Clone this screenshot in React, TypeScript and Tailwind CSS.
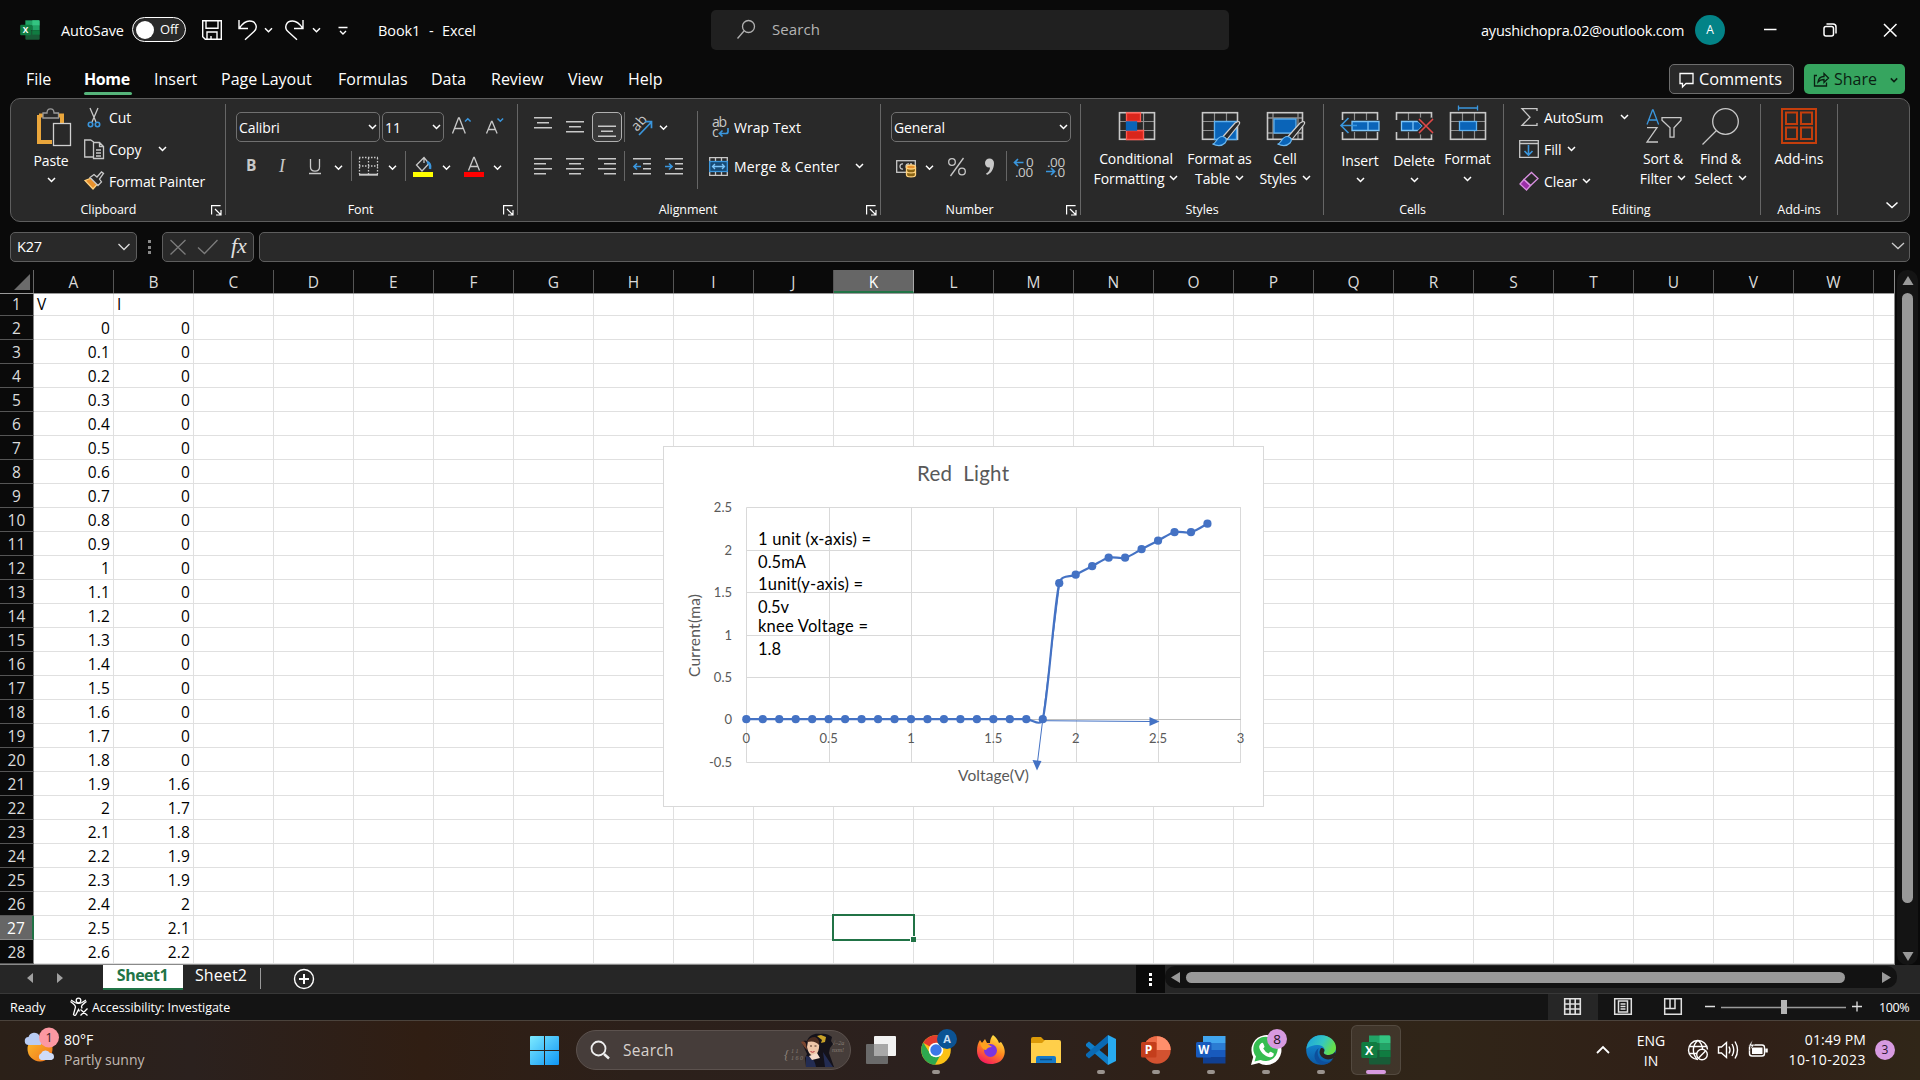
import React from 'react';

const ROWS: [string, string][] = [
  ['0', '0'], ['0.1', '0'], ['0.2', '0'], ['0.3', '0'], ['0.4', '0'], ['0.5', '0'], ['0.6', '0'], ['0.7', '0'],
  ['0.8', '0'], ['0.9', '0'], ['1', '0'], ['1.1', '0'], ['1.2', '0'], ['1.3', '0'], ['1.4', '0'], ['1.5', '0'],
  ['1.6', '0'], ['1.7', '0'], ['1.8', '0'], ['1.9', '1.6'], ['2', '1.7'], ['2.1', '1.8'], ['2.2', '1.9'],
  ['2.3', '1.9'], ['2.4', '2'], ['2.5', '2.1'], ['2.6', '2.2'],
];
const SERIES = [...Array(19).fill(0), 1.6, 1.7, 1.8, 1.9, 1.9, 2, 2.1, 2.2, 2.2, 2.3] as number[];
const COLS = 'ABCDEFGHIJKLMNOPQRSTUVW'.split('');

type IcoProps = { x: number; y: number; w: number; h: number; c?: string; children?: React.ReactNode };

/** Icon drawn in window coordinates: x, y, w and h give its view box and size. */
function Ico({ x, y, w, h, c = '', children }: IcoProps) {
  return (
    <svg width={w} height={h} viewBox={`${x} ${y} ${w} ${h}`} className={`block shrink-0 overflow-visible ${c}`}
      fill="none" stroke="#c8c8c8" strokeWidth={1.3}>
      {children}
    </svg>
  );
}

function Chev({ x, y, s = 3.5, c = '#fff' }: { x: number; y: number; s?: number; c?: string }) {
  return <path d={`M${x - s} ${y - s / 2}l${s} ${s}l${s} ${-s}`} stroke={c} strokeWidth={1.5} />;
}

function DownMark({ c = '' }: { c?: string }) {
  return (
    <svg width="9" height="6" viewBox="0 0 9 6" className={`block shrink-0 ${c}`} fill="none" stroke="#fff" strokeWidth="1.5">
      <path d="M1 1l3.500 3.500L8 1" />
    </svg>
  );
}

function ExcelLogo({ size }: { size: number }) {
  return (
    <svg width={size} height={size} viewBox="0 0 30 30" className="block shrink-0">
      <path d="M8 .5h21v8H8z" fill="#21a366" /><path d="M18.500 .5H28a1.500 1.500 0 0 1 1.500 1.500v6.500h-11z" fill="#33c481" />
      <path d="M8 8.500h10.500v7H8z" fill="#107c41" /><path d="M18.500 8.500h11v7h-11z" fill="#21a366" />
      <path d="M8 15.500h21.500V28a1.500 1.500 0 0 1-1.500 1.500H9.500A1.500 1.500 0 0 1 8 28z" fill="#185c37" />
      <path d="M18.500 15.500h11V22h-11z" fill="#107c41" />
      <rect x="0.300" y="7" width="16" height="16" rx="1.500" fill="#107c41" />
      <text x="8.200" y="19.600" fontSize="12.500" fontWeight="700" fill="#fff" textAnchor="middle" fontFamily="Open Sans">X</text>
    </svg>
  );
}

function TitleBar() {
  return (
    <div className="flex h-[60px] items-start">
      <div className="ml-5 mt-5"><ExcelLogo size={20} /></div>
      <span className="ml-[21px] mt-[21px] w-[71px] text-[14.500px] leading-[20px] tracking-[-0.05px]">AutoSave</span>
      <div className="mt-[17px] flex h-[25px] w-[54px] items-center rounded-full border border-white bg-[#292929] pl-[3px]">
        <div className="size-[18px] rounded-full bg-white" />
        <span className="ml-[6px] text-[13px] tracking-[-0.2px]">Off</span>
      </div>
      <Ico x={186} y={0} w={166} h={60}>
        <g stroke="#fff" strokeWidth={1.4}>
          <path d="M202.700 20.700h18.600v18.600h-16l-2.600-2.600z M206 20.700v7.600h12v-7.600 M207 39v-7h10v7 M211 39v-3" />
          <path d="M239 20v8.500h9 M239.500 28c3-4.500 6.500-7 10-7c7 0 8.500 7 4.500 10.500l-9 8.300" />
          <path d="M303 20v8.500h-9 M302.500 28c-3-4.500-6.500-7-10-7c-7 0-8.500 7-4.500 10.500l9 8.300" />
          <path d="M338.500 27.500h9 M340 31l3 3l3-3" />
        </g>
        <Chev x={268.5} y={30} /><Chev x={316.5} y={30} />
      </Ico>
      <span className="ml-[26px] mt-[21px] flex w-[333px] text-[14.500px] leading-[20px] tracking-[-0.1px]">
        <span className="w-[51px]">Book1</span><span className="w-[13px]">-</span><span>Excel</span>
      </span>
      <div className="mt-[10px] flex h-10 w-[518px] items-center rounded-[5px] bg-[#202020]">
        <Ico x={711} y={10} w={61} h={40}>
          <g stroke="#b0b0b0"><circle cx="748.500" cy="26.500" r="6" /><path d="M744 31l-6.500 7.500" /></g>
        </Ico>
        <span className="-mt-px text-[15px] tracking-[0.1px] text-[#b4b4b4]">Search</span>
      </div>
      <span className="ml-[252px] mt-[21px] w-[214px] whitespace-nowrap text-[14.500px] leading-[20px] tracking-[-0.210px]">ayushichopra.02@outlook.com</span>
      <div className="mt-[15px] flex size-[30px] items-center justify-center rounded-full bg-[#038387] text-[12px]">A</div>
      <Ico x={1725} y={0} w={195} h={60}>
        <g stroke="#fff" strokeWidth={1.5}>
          <path d="M1764 29.500h12.500 M1884 24l12.500 12.500 M1896.500 24l-12.500 12.500" />
          <rect x="1824" y="26.500" width="9.500" height="9.500" rx="2" />
          <path d="M1826.500 24h6.500a3 3 0 0 1 3 3v6.500" />
        </g>
      </Ico>
    </div>
  );
}

const TABS: [string, string][] = [
  ['Insert', 'w-[67px]'], ['Page Layout', 'w-[117px]'], ['Formulas', 'w-[93px]'], ['Data', 'w-[60px]'],
  ['Review', 'w-[77px]'], ['View', 'w-[60px]'], ['Help', 'w-[60px]'],
];

function TabStrip() {
  return (
    <div className="flex h-[38px] whitespace-nowrap text-[16px] leading-[38px]">
      <span className="ml-[26px] w-[58px]">File</span>
      <div className="mr-[22px] flex w-[48px] flex-col">
        <span className="h-8 font-bold tracking-[-0.4px]">Home</span>
        <div className="h-[3px] w-full rounded bg-[#55b47a]" />
      </div>
      {TABS.map(([t, w]) => <span key={t} className={w}>{t}</span>)}
      <div className="ml-auto mt-1 flex h-[30px] w-[125px] items-center rounded-[5px] border border-[#6e6e6e] bg-[#292929]">
        <Ico x={1670} y={64} w={29} h={28}>
          <path d="M1680 72.500h13v10h-7l-3.500 3.500v-3.500h-2.500z" stroke="#fff" />
        </Ico>
        <span className="text-[16.300px]">Comments</span>
      </div>
      <div className="ml-[10px] mr-[15px] mt-1 flex h-[30px] w-[101px] items-center rounded-[5px] bg-[#36a55f] text-[#0a1f12]">
        <Ico x={1804} y={64} w={30} h={30}>
          <g stroke="#0a1f12">
            <path d="M1817 75.500h-2.500v10.500h12v-3.500" />
            <path d="M1818 82c.5-3.500 3-5.500 6-5.500v-3l4.500 4.500l-4.500 4.500v-3c-2.500 0-4.500.8-6 2.500z" />
          </g>
        </Ico>
        <span className="w-[56px] text-[16px]">Share</span>
        <Ico x={1890} y={64} w={12} h={30}><Chev x={1894} y={80} s={3.2} c="#0a1f12" /></Ico>
      </div>
    </div>
  );
}

type GroupProps = { label: string; w: string; launcher?: boolean; pad?: string; children: React.ReactNode };

function Group({ label, w, launcher, pad = '', children }: GroupProps) {
  return (
    <div className={`flex h-[111px] shrink-0 flex-col border-r border-[#666] ${w}`}>
      <div className="flex h-[97px] shrink-0 whitespace-nowrap text-[14px] tracking-[-0.1px]">{children}</div>
      <div className="flex h-[18px] shrink-0 items-center">
        <span className={`flex-1 text-center text-[12.500px] leading-[18px] tracking-[-0.1px] ${pad}`}>{label}</span>
        {launcher && (
          <svg width="11" height="11" viewBox="0 0 11 11" className="mr-[3px]" fill="none" stroke="#fff" strokeWidth="1.2">
            <path d="M.6 9.500V.6h9 M4 4l5.500 5.500 M10 5v5H5" />
          </svg>
        )}
      </div>
    </div>
  );
}

const Sep = ({ c = 'h-[30px]' }: { c?: string }) => <div className={`w-px shrink-0 bg-[#666] ${c}`} />;

type BigProps = { w: string; icon: React.ReactNode; a: string; b?: string; low?: boolean; mark?: boolean };

function Big({ w, icon, a, b, low, mark = true }: BigProps) {
  return (
    <div className={`flex shrink-0 flex-col items-center ${w}`}>
      {icon}
      <span className={low ? 'mt-[3px] h-5 leading-[20px]' : 'mt-px h-5 leading-[20px]'}>{a}</span>
      <div className={low ? 'mt-px flex h-4 items-center' : 'flex h-5 items-center'}>
        {b && <span className="mr-[5px] leading-[20px]">{b}</span>}
        {mark && <DownMark c={b ? '-mt-[3px]' : ''} />}
      </div>
    </div>
  );
}

function TableGlyph({ x }: { x: number }) {
  return (
    <g>
      <path d={`M${x + 12} 113v27 M${x + 24} 113v27 M${x} 121.500h35 M${x} 130.500h35`} stroke="#8f8f8f" strokeWidth={1.2} />
      <rect x={x} y={112.7} width={35} height={26.6} strokeWidth={1.6} />
    </g>
  );
}

function BrushGlyph({ x }: { x: number }) {
  return (
    <g>
      <path d={`M${x + 35.5} 121.500c2 0 2 1.500 1 3l-12 15l-4-3l12-13.500z`} fill="#292929" stroke="#d0d0d0" strokeWidth={1.2} />
      <path d={`M${x + 10} 144c4 0 4-8 10-7.500c4 .5 5 4 2.500 6.500c-3 3-8 3-12.500 1z`} fill="#0a64b8" stroke="#6cb8f0" strokeWidth={1.2} />
    </g>
  );
}

function Ribbon() {
  return (
    <div className="mx-[10px] flex h-[124px] rounded-[10px] border border-[#5e5e5e] bg-[#292929] pt-[5px]">
      <Group label="Clipboard" w="w-[215px]" launcher pad="pr-[5px]">
        <div className="ml-[6px] flex w-[68px] flex-col items-center">
          <Ico x={17} y={104} w={68} h={44}>
            <path d="M39 115.500h23v10 M39 115v27h13" stroke="#eaa63b" strokeWidth={4} />
            <path d="M43 118v-5h4c0-5.500 7-5.500 7 0h4.500v5z" fill="#292929" stroke="#9a9a9a" />
            <rect x="53.500" y="123.500" width="17" height="22" fill="#292929" stroke="#d0d0d0" />
          </Ico>
          <span className="h-[26px] leading-[25px]">Paste</span>
          <DownMark c="mt-[3px]" />
        </div>
        <div className="-mt-[3px] flex flex-col">
          <div className="flex h-8 items-center">
            <Ico x={85} y={101} w={24} h={32}>
              <path d="M90 108l6 14 M98 108l-6 14" />
              <g stroke="#3a96dd" strokeWidth={1.6}><circle cx="90.500" cy="124.500" r="2.200" /><circle cx="97.500" cy="124.500" r="2.200" /></g>
            </Ico>
            Cut
          </div>
          <div className="flex h-8 items-center">
            <Ico x={85} y={133} w={24} h={32}>
              <path d="M93 157h-8.300v-17h6l3 2" /><path d="M93.500 142.500h6l4 4v12h-10z M99.500 142.500v4h4 M96 150h5 M96 153h5 M96 156h5" />
            </Ico>
            <span className="w-[49px]">Copy</span><DownMark />
          </div>
          <div className="flex h-8 items-center">
            <Ico x={85} y={165} w={24} h={32}>
              <path d="M85 180.500l6.500-2.500l6 6l-4.500 5z" fill="#e8912d" stroke="#ffd27f" />
              <path d="M90 177.500l4-3l3 2.500l4.500-5l2 1.500l-4 5.500l2 3l-3.500 3.500z" fill="#292929" />
            </Ico>
            Format Painter
          </div>
        </div>
      </Group>

      <Group label="Font" w="w-[292px]" launcher pad="pr-[8px]">
        <div className="flex flex-col pt-2">
          <div className="ml-[10px] flex h-[30px]">
            <div className="mr-[2px] flex w-[144px] items-center rounded-[5px] border border-[#707070] pl-[2px] pr-[2px]">
              <span className="flex-1">Calibri</span><DownMark />
            </div>
            <div className="flex w-[62px] items-center rounded-[5px] border border-[#707070] pl-[2px] pr-[2px]">
              <span className="flex-1">11</span><DownMark />
            </div>
            <Ico x={444} y={112} w={70} h={30}>
              <path d="M452.500 133.500l6-15.500h.8l6 15.500 M454.500 128.500h9 M486.500 133.500l5-12h.6l5 12 M488.500 129.500h7" />
              <g stroke="#3a96dd" strokeWidth={1.5}><path d="M465 121.500l2.800-2.800l2.800 2.800 M497.500 118.500l2.800 2.800l2.800-2.800" /></g>
            </Ico>
          </div>
          <div className="ml-[10px] mt-2 flex h-8 items-center">
            <span className="ml-[10px] w-[33px] text-[15.500px] font-bold text-[#c8c8c8]">B</span>
            <span className="w-[30px] font-['Liberation_Serif'] text-[18px] italic text-[#c8c8c8]">I</span>
            <Ico x={308} y={150} w={42} h={32}>
              <path d="M309.500 159v8c0 5.500 9 5.500 9 0v-8 M308 173.500h12" /><Chev x={337.5} y={167.5} />
            </Ico>
            <Sep />
            <Ico x={352} y={150} w={53} h={32}>
              <path d="M359.500 158v16 M368.500 158v16 M377.500 158v16 M359 157.500h19 M359 166h19" strokeDasharray="1.500 1.500" />
              <path d="M359 174.700h19" strokeWidth={2} /><Chev x={392.5} y={167.5} />
            </Ico>
            <Sep />
            <Ico x={406} y={150} w={53} h={32}>
              <path d="M416.500 165l7.500-7.500l5 6l-7 7.500z M424 163v-6" /><path d="M427 162c3 1 3.500 4 3 7" stroke="#3a96dd" strokeWidth={2.5} />
              <rect x="413" y="172" width="20" height="5" fill="#ff0" stroke="none" /><Chev x={446.5} y={167.5} />
            </Ico>
            <Ico x={459} y={150} w={50} h={32}>
              <path d="M468.500 170.500l5.200-13h.6l5.200 13 M470.500 166.500h7" />
              <rect x="464" y="172" width="20" height="5" fill="#f00" stroke="none" /><Chev x={497.5} y={167.5} />
            </Ico>
          </div>
        </div>
      </Group>

      <Group label="Alignment" w="w-[363px]" launcher pad="pr-[8px]">
        <div className="flex w-[179px] flex-col pt-2">
          <div className="flex h-[30px]">
            <Ico x={518} y={112} w={74} h={30}>
              <path d="M534 117.700h18 M537 122.700h12 M534 127.700h18 M566 121.700h18 M569 126.700h12 M566 131.700h18" strokeWidth={1.5} />
            </Ico>
            <div className="w-[30px] rounded-[5px] border border-[#b0b0b0] bg-[#383838]">
              <Ico x={593} y={113} w={28} h={28}>
                <path d="M598 126.200h18 M601 131.200h12 M598 136.200h18" strokeWidth={1.5} />
              </Ico>
            </div>
            <Sep c="ml-[2px] h-[30px]" />
            <Ico x={625} y={112} w={50} h={30}>
              <text x="0" y="0" transform="translate(637 132) rotate(-48)" fontSize="14" fill="#c8c8c8" stroke="none">ab</text>
              <path d="M639 135l12-12.500 M645 121.700h6.500v6.500" stroke="#3a96dd" strokeWidth={1.7} /><Chev x={663.5} y={127.5} />
            </Ico>
          </div>
          <div className="mt-2 flex h-8 items-center">
            <Ico x={518} y={150} w={106} h={32}>
              <path d="M534 158.700h18 M534 163.700h12 M534 168.700h18 M534 173.700h12 M566 158.700h18 M569 163.700h12 M566 168.700h18 M569 173.700h12 M598 158.700h18 M604 163.700h12 M598 168.700h18 M604 173.700h12" strokeWidth={1.5} />
            </Ico>
            <Sep />
            <Ico x={625} y={150} w={60} h={32}>
              <path d="M633 158.700h18 M643 163.700h8 M643 168.700h8 M633 173.700h18 M665 158.700h18 M675 163.700h8 M675 168.700h8 M665 173.700h18" strokeWidth={1.5} />
              <path d="M634 166.500h7 M637 163.500l-3 3l3 3 M665 166.500h7 M669 163.500l3 3l-3 3" stroke="#3a96dd" strokeWidth={1.7} />
            </Ico>
          </div>
        </div>
        <Sep c="mt-[7px] h-[78px]" />
        <div className="flex flex-col pt-2">
          <div className="flex h-[30px] items-center">
            <Ico x={698} y={112} w={36} h={30}>
              <text x="712" y="127" fontSize="14" fill="#c8c8c8" stroke="none" textLength="15">ab</text>
              <text x="712" y="137" fontSize="14" fill="#c8c8c8" stroke="none">c</text>
              <path d="M728 128v3.500q0 2-2 2h-6 M722.500 130.500l-3 3l3 3" stroke="#3a96dd" strokeWidth={1.7} />
            </Ico>
            <span className="tracking-[0.050px]">Wrap Text</span>
          </div>
          <div className="mt-2 flex h-8 items-center">
            <Ico x={698} y={150} w={36} h={32}>
              <path d="M709.700 157.700h17.600v17.600h-17.600z M715.500 158v17 M721.500 158v17" />
              <rect x="709.700" y="161.500" width="17.600" height="10" fill="#174a75" stroke="#3a96dd" />
              <path d="M712.500 166.500h12 M715 164l-2.500 2.500l2.500 2.500 M722 164l2.500 2.500l-2.500 2.500" stroke="#7cc4f8" />
            </Ico>
            <span className="w-[121px] pt-px tracking-[0.2px]">Merge &amp; Center</span><DownMark />
          </div>
        </div>
      </Group>

      <Group label="Number" w="w-[200px]" launcher pad="pr-[8px]">
        <div className="flex flex-col pt-2">
          <div className="ml-[10px] flex h-[30px] w-[180px] items-center rounded-[5px] border border-[#707070] pl-[2px] pr-[2px]">
            <span className="flex-1">General</span><DownMark />
          </div>
          <div className="mt-2 flex h-8 items-center">
            <Ico x={881} y={150} w={125} h={32}>
              <rect x="896.700" y="160.700" width="18.600" height="11.600" />
              <path d="M903 164c-4-1-4 6 0 5 M909 164c-4-1-4 6 0 5 M912 164h-2" />
              <path d="M906.500 167v8c0 2.500 9 2.500 9 0v-8" fill="#8a6414" stroke="#ffd27f" />
              <ellipse cx="911" cy="167" rx="4.500" ry="2" fill="#e8912d" stroke="#ffd27f" /><path d="M906.500 171c0 2.500 9 2.500 9 0" stroke="#ffd27f" />
              <Chev x={929.5} y={167.5} />
              <circle cx="952" cy="162" r="3.300" /><circle cx="962" cy="171.500" r="3.300" /><path d="M963.500 158l-13 18" />
              <path d="M985 163a4.500 4.500 0 0 1 9 0c0 6-3 10.500-7 12l-1-1.500c2.500-1.200 4-3.500 4-6c-3 .5-5-1.500-5-4.500z" fill="#c8c8c8" stroke="none" />
            </Ico>
            <Sep />
            <Ico x={1007} y={150} w={70} h={32}>
              <g fill="#c8c8c8" stroke="none" fontSize="13.500">
                <text x="1026" y="166.500">0</text><text x="1015" y="176.500" textLength="18">.00</text>
                <text x="1047" y="166.500" textLength="18">.00</text><text x="1054" y="176.500" textLength="11">.0</text>
              </g>
              <path d="M1014.500 162.500h9 M1018 159l-3.500 3.500l3.500 3.500 M1046 171.500h8.500 M1051 168l3.500 3.500l-3.500 3.500" stroke="#3a96dd" strokeWidth={1.7} />
            </Ico>
          </div>
        </div>
      </Group>

      <Group label="Styles" w="w-[243px]">
        <Big w="w-[110px]" a="Conditional" b="Formatting" icon={
          <Ico x={1081} y={104} w={110} h={44}>
            <TableGlyph x={1119.5} />
            <path d="M1126.500 113h14v8.500h-14z M1126.500 130.500h17v9h-17z" fill="#d9261c" stroke="#ff5a50" />
            <path d="M1126.500 122h10v8h-10z" fill="#0a64b8" stroke="#0a64b8" />
          </Ico>} />
        <Big w="w-[57px]" a="Format as" b="Table" icon={
          <Ico x={1191} y={104} w={57} h={44}>
            <TableGlyph x={1202.5} /><path d="M1214.500 121.500h22v18h-22z" fill="#0a64b8" stroke="#5cb0f0" /><BrushGlyph x={1202.5} />
          </Ico>} />
        <Big w="w-[74px]" a="Cell" b="Styles" icon={
          <Ico x={1248} y={104} w={74} h={44}>
            <path d="M1267.500 118h35 M1273 113v27 M1298 113v27 M1267.500 133h35" stroke="#8f8f8f" />
            <rect x="1267.500" y="112.700" width="35" height="26.600" strokeWidth={1.6} />
            <rect x="1274" y="119" width="22" height="14" fill="#0a64b8" stroke="#5cb0f0" /><BrushGlyph x={1267.5} />
          </Ico>} />
      </Group>

      <Group label="Cells" w="w-[180px]" pad="pr-[2px]">
        <Big w="w-[72px]" a="Insert" low icon={
          <Ico x={1324} y={104} w={72} h={44}>
            <TableGlyph x={1342.5} />
            <rect x="1341" y="120" width="40" height="12" fill="#292929" stroke="none" />
            <path d="M1352 121.500h27v9h-27z M1368 121.500v9" fill="#0a64b8" stroke="#7cc4f8" />
            <path d="M1341 125.500h16 M1348.500 118l-7.500 7.500l7.500 7.500" stroke="#3a96dd" strokeWidth={1.6} />
          </Ico>} />
        <Big w="w-[36px]" a="Delete" low icon={
          <Ico x={1396} y={104} w={36} h={44}>
            <TableGlyph x={1396.5} />
            <rect x="1395" y="120" width="38" height="12" fill="#292929" stroke="none" />
            <path d="M1401.500 121.500h17l4 4.500l-4 4.500h-17z M1413 121.500v9" fill="#0a64b8" stroke="#7cc4f8" />
            <path d="M1419 119l14 14 M1433 119l-14 14" stroke="#292929" strokeWidth={5} />
            <path d="M1419 119l14 14 M1433 119l-14 14" stroke="#e04848" strokeWidth={1.6} />
          </Ico>} />
        <Big w="w-[71px]" a="Format" icon={
          <Ico x={1432} y={104} w={71} h={44}>
            <TableGlyph x={1450.5} />
            <rect x="1459.500" y="121.500" width="17" height="9" fill="#0a64b8" stroke="#5cb0f0" />
            <path d="M1458.500 108h19 M1458.500 105.500v5 M1477.500 105.500v5" stroke="#3a96dd" />
          </Ico>} />
      </Group>

      <Group label="Editing" w="w-[257px]" pad="pr-[2px]">
        <div className="-mt-[3px] flex w-[130px] flex-col">
          <div className="flex h-8 items-center">
            <Ico x={1504} y={101} w={40} h={32}><path d="M1537 111v-2.300h-15l8 8.500l-8 8.200h15V123" /></Ico>
            <span className="w-[76px]">AutoSum</span><DownMark />
          </div>
          <div className="flex h-8 items-center">
            <Ico x={1504} y={133} w={40} h={32}>
              <path d="M1519.700 140.700h18.600v16.600h-18.600z M1519.700 143.500h18.600" />
              <path d="M1528.500 145v9.500 M1524.500 151l4 4l4-4" stroke="#3a96dd" strokeWidth={1.6} />
            </Ico>
            <span className="w-[23px]">Fill</span><DownMark c="-mt-px" />
          </div>
          <div className="flex h-8 items-center">
            <Ico x={1504} y={165} w={40} h={32}>
              <path d="M1520 184l6.500 6l4-4.500l-6.500-6z" fill="#9b2fa8" stroke="#d88fe0" /><path d="M1524 179.500l7.500-7l6.500 6l-7.500 7z" stroke="#d88fe0" />
            </Ico>
            <span className="w-[38px]">Clear</span><DownMark c="-mt-px" />
          </div>
        </div>
        <Big w="w-[58px]" a="Sort &" b="Filter" icon={
          <Ico x={1634} y={104} w={58} h={44}>
            <path d="M1647 124.500l5.500-14.500h.6l5.500 14.500 M1649 120h7.500" stroke="#3a96dd" />
            <path d="M1647 127.700h10l-10 14.300h11" /><path d="M1662 117.700h19v2.500l-7 7.500v9.500h-4v-9.500l-8-7.500z" />
          </Ico>} />
        <Big w="w-[57px]" a="Find &" b="Select" icon={
          <Ico x={1692} y={104} w={57} h={44}><circle cx="1725.500" cy="121.500" r="12.800" /><path d="M1716.500 130.500l-14 14" /></Ico>} />
      </Group>

      <Group label="Add-ins" w="w-[77px]">
        <Big w="w-[76px]" a="Add-ins" mark={false} icon={
          <Ico x={1761} y={104} w={76} h={44}>
            <path d="M1782 109h34v34h-34z M1786 112.500h11v11.500h-11z M1801 112.500h11v11.500h-11z M1786 127.500h11v11.500h-11z M1801 127.500h11v11.500h-11z" stroke="#c43e0c" strokeWidth={2} />
          </Ico>} />
      </Group>
      <Ico x={1838} y={104} w={70} h={111}><path d="M1886.500 202.500l5.500 5l5.500-5" stroke="#fff" strokeWidth={1.5} /></Ico>
    </div>
  );
}

function FormulaBar() {
  return (
    <div className="mt-[10px] flex h-[30px] px-[10px]">
      <div className="flex w-[127px] items-center rounded-[5px] border border-[#5e5e5e] bg-[#292929]">
        <span className="ml-[6px] w-[101px] text-[14.500px] tracking-[-0.2px]">K27</span>
        <svg width="12" height="8" viewBox="0 0 12 8" fill="none" stroke="#ddd" strokeWidth="1.300"><path d="M.5 1l5.500 5.500L11.500 1" /></svg>
      </div>
      <div className="flex w-[25px] flex-col items-center justify-center gap-[2.500px]">
        <div className="size-[3px] bg-[#8a8a8a]" /><div className="size-[3px] bg-[#8a8a8a]" /><div className="size-[3px] bg-[#8a8a8a]" />
      </div>
      <div className="mr-[5px] flex w-[92px] rounded-[5px] border border-[#5e5e5e] bg-[#292929]">
        <Ico x={163} y={233} w={64} h={28}>
          <path d="M170.500 240l15 14.500 M185.500 240l-15 14.500 M198 247.500l6.500 6l13-13.500" stroke="#7c7c7c" />
        </Ico>
        <span className="ml-[4px] font-['Liberation_Serif'] text-[22px] italic leading-[25px] text-[#e0e0e0]">fx</span>
      </div>
      <div className="flex flex-1 items-center justify-end rounded-[5px] border border-[#5e5e5e] bg-[#292929] pr-[4px]">
        <svg width="14" height="8" viewBox="0 0 14 8" className="-mt-[2px]" fill="none" stroke="#ccc" strokeWidth="1.300"><path d="M1 1l6 5.500L13 1" /></svg>
      </div>
    </div>
  );
}

const px = (v: number) => 746.3 + 164.7 * v;
const py = (v: number) => 719.2 - 85 * v;

function curvePath() {
  const p = SERIES.map((v, i) => [px(i / 10), py(v)]);
  let d = `M${p[0][0]} ${p[0][1]}`;
  const tangent = (i: number, seg: number) => {
    const a = p[Math.max(0, i - 1)];
    const b = p[Math.min(p.length - 1, i + 1)];
    const dx = (b[0] - a[0]) / 6;
    const dy = (b[1] - a[1]) / 6;
    const k = Math.min(1, seg / 2 / (Math.hypot(dx, dy) || 1));
    return [dx * k, dy * k];
  };
  for (let i = 0; i < p.length - 1; i++) {
    const seg = Math.hypot(p[i + 1][0] - p[i][0], p[i + 1][1] - p[i][1]);
    const t0 = tangent(i, seg);
    const t1 = tangent(i + 1, seg);
    d += `C${p[i][0] + t0[0]} ${p[i][1] + t0[1]} ${p[i + 1][0] - t1[0]} ${p[i + 1][1] - t1[1]} ${p[i + 1][0]} ${p[i + 1][1]}`;
  }
  return d;
}

const NOTES: [string, number, number][] = [
  ['1 unit (x-axis) =', 545, 113], ['0.5mA', 568, 48], ['1unit(y-axis) =', 590, 105],
  ['0.5v', 613, 31], ['knee Voltage =', 632, 110], ['1.8', 655, 23],
];

function Chart() {
  return (
    <svg width="601" height="361" viewBox="663 446 601 361" className="absolute left-[663px] top-[176px] block" fontFamily="Lato, sans-serif">
      <rect x="663.500" y="446.500" width="600" height="360" fill="#fff" stroke="#d9d9d9" />
      <g stroke="#d9d9d9" fill="none">
        {[0, 1, 2, 3, 4, 5, 6].map((i) => <path key={i} d={`M${Math.round(px(i / 2)) + 0.5} 507.500v255`} />)}
        {[507.5, 550.5, 592.5, 635.5, 677.5, 762.5].map((y) => <path key={y} d={`M746.500 ${y}h494.500`} />)}
        <path d="M746.500 719.500h494.500" stroke="#bfbfbf" />
      </g>
      <g fill="#595959" fontSize="13">
        {['2.5', '2', '1.5', '1', '0.5', '0', '-0.5'].map((t, i) => (
          <text key={t} x="732" y={512.3 + i * 42.4} textAnchor="end">{t}</text>
        ))}
        {['0', '0.5', '1', '1.5', '2', '2.5', '3'].map((t, i) => (
          <text key={t} x={px(i / 2)} y="743.300" textAnchor="middle">{t}</text>
        ))}
        <text x="917" y="480.500" fontSize="20.500" textLength="92" style={{ whiteSpace: 'pre' }}>Red  Light</text>
        <text x="958" y="780.500" fontSize="15.500" textLength="71">Voltage(V)</text>
        <text transform="translate(700 677) rotate(-90)" fontSize="15.500" textLength="83">Current(ma)</text>
      </g>
      <g fill="#000" fontSize="16.500">
        {NOTES.map(([t, y, w]) => <text key={t} x="758" y={y} textLength={w}>{t}</text>)}
      </g>
      <g stroke="#4472c4" fill="none">
        <path d={curvePath()} strokeWidth="2.200" />
        <path d="M1059.500 584L1037.500 762 M1043 720.700L1150 721.500" strokeWidth="1" />
      </g>
      <g fill="#4472c4">
        <path d="M1159.500 721.500l-10-4.500v9z M1037 770.500l-4.500-10.500l9 1z" />
        {SERIES.map((v, i) => <circle key={i} cx={px(i / 10)} cy={py(v)} r="4.100" />)}
      </g>
    </svg>
  );
}

function Sheet() {
  return (
    <div className="relative mt-2 flex h-[695px]">
      <div className="w-[1895px] overflow-hidden border-b border-r border-[#8a8a8a] bg-white text-[15.500px] tracking-[0.150px]">
        <div className="flex h-6 w-[1980px] border-b border-[#9a9a9a] bg-[#0a0a0a] text-[#dcdcdc]">
          <div className="flex w-[34px] shrink-0 items-end justify-end border-r border-[#666] pb-[3px] pr-[3px]">
            <svg width="16" height="16" viewBox="0 0 16 16"><path d="M16 0v16H0z" fill="#6b6b6b" /></svg>
          </div>
          {COLS.map((c) => (
            <div key={c} className={c === 'K'
              ? 'w-20 shrink-0 border-b-2 border-r border-b-[#217346] border-r-[#aaa] bg-[#666] text-center leading-[25px] text-white'
              : 'w-20 shrink-0 border-r border-[#555] text-center leading-[25px]'}>{c}</div>
          ))}
        </div>
        {[['V', 'I'], ...ROWS].map(([a, b], r) => (
          <div key={r} className={r === 0 ? 'flex h-[22px] w-[1980px] leading-[21px]' : 'flex h-6 w-[1980px] leading-[25px]'}>
            <div className={r === 26
              ? 'h-full w-[34px] shrink-0 border-b border-r-2 border-b-[#888] border-r-[#217346] bg-[#666] text-center text-white'
              : 'h-full w-[34px] shrink-0 border-b border-r border-b-[#555] border-r-[#888] bg-[#0a0a0a] text-center text-[#dcdcdc]'}>{r + 1}</div>
            {COLS.map((c, i) => (
              <div key={c} className={r === 0
                ? 'h-full w-20 shrink-0 border-b border-r border-[#e0e0e0] pl-[3px] text-black'
                : 'h-full w-20 shrink-0 border-b border-r border-[#e0e0e0] pr-[3px] text-right text-black'}>
                {i === 0 ? a : i === 1 ? b : ''}
              </div>
            ))}
            <div className="h-full w-20 border-b border-[#e0e0e0]" />
          </div>
        ))}
      </div>
      <div className="ml-[2px] flex w-[21px] flex-col items-center rounded-[10px] bg-[#141414]">
        <svg width="12" height="9" viewBox="0 0 12 9" className="mt-[6px]"><path d="M6 0l5.500 9H.5z" fill="#999" /></svg>
        <div className="mt-2 h-[610px] w-[11px] rounded-full bg-[#999]" />
        <svg width="12" height="9" viewBox="0 0 12 9" className="mt-auto mb-[4px]"><path d="M6 9L.5 0h11z" fill="#999" /></svg>
      </div>
      <div className="absolute left-[832px] top-[644px] h-[27px] w-[83px] border-2 border-[#217346]">
        <div className="absolute -bottom-[3px] -right-[3px] size-[6px] border-l border-t border-white bg-[#217346]" />
      </div>
      <Chart />
    </div>
  );
}

function SheetTabs() {
  return (
    <div className="flex h-[28px] bg-[#262626] text-[16px]">
      <Ico x={0} y={965} w={103} h={28}><path d="M33 973v10l-6-5z M57 973v10l6-5z" fill="#a0a0a0" stroke="none" /></Ico>
      <div className="h-[25px] w-[80px] border-b-2 border-[#217346] bg-white pr-px text-center font-bold leading-[21px] tracking-[-0.5px] text-[#217346]">Sheet1</div>
      <span className="ml-3 w-[65px] leading-[21px] tracking-[0.1px]">Sheet2</span>
      <div className="mt-[3px] h-[21px] w-px bg-[#999]" />
      <Ico x={261} y={965} w={875} h={28}>
        <g stroke="#fff" strokeWidth={1.4}><circle cx="304" cy="979" r="9.500" /><path d="M299 979h10 M304 974v10" strokeWidth={2} /></g>
      </Ico>
      <div className="flex w-[29px] flex-col items-center justify-center gap-[2px] bg-[#0a0a0a]">
        <div className="size-[3px] bg-white" /><div className="size-[3px] bg-white" /><div className="size-[3px] bg-white" />
      </div>
      <div className="mt-px flex h-[22px] w-[732px] items-center rounded-[10px] bg-[#121212]">
        <svg width="9" height="11" viewBox="0 0 9 11" className="ml-[6px]"><path d="M9 0v11L0 5.500z" fill="#999" /></svg>
        <div className="ml-[6px] h-[11px] w-[659px] rounded-full bg-[#999]" />
        <svg width="9" height="11" viewBox="0 0 9 11" className="ml-[37px]"><path d="M0 0v11l9-5.500z" fill="#999" /></svg>
      </div>
    </div>
  );
}

function StatusBar() {
  return (
    <div className="flex h-[27px] border-t border-[#383838] bg-[#141414] text-[12.500px] leading-[28px] tracking-[-0.05px]">
      <span className="ml-[10px] w-[58px]">Ready</span>
      <Ico x={68} y={994} w={24} h={26}>
        <g stroke="#fff"><circle cx="78.500" cy="1000.500" r="2.300" />
          <path d="M70.500 1001.500c3 2.500 5 3 5 5.500l-2 7.500c1 1.500 2 1 2.500 0l2.500-5l1 2 M86.500 1001.500c-3 2.500-5 3-5 5l.5 2 M71 1000l4 2.500c2 1 5 1 7 0l4-2.500 M80.500 1009.500l7 6 M87.500 1008.500l-7 7" /></g>
      </Ico>
      <span className="flex-1">Accessibility: Investigate</span>
      <div className="w-[50px] bg-[#262626]">
        <Ico x={1548} y={994} w={50} h={26}><path d="M1564.700 998.700h15.600v15.600h-15.600z M1570 999v15 M1575.200 999v15 M1565 1004h15 M1565 1009h15" stroke="#e0e0e0" strokeWidth={1.6} /></Ico>
      </div>
      <Ico x={1598} y={994} w={281} h={26}>
        <g stroke="#e0e0e0">
          <path d="M1614.700 998.700h16.600v15.600h-16.600z M1618.500 1001h9v11h-9z" strokeWidth={1.5} /><path d="M1620.500 1004h5 M1620.500 1006.500h5 M1620.500 1009h5" />
          <path d="M1664.700 998.700h16.600v15.600h-16.600z M1665 1008.500h10v-9 M1670 999v9" strokeWidth={1.5} />
          <path d="M1705 1006.500h10 M1852 1006.500h10 M1857 1001.500v10" /><path d="M1721 1007.500h125" stroke="#9a9a9a" />
        </g>
        <rect x="1781" y="1000" width="6" height="14" fill="#b4b4b4" stroke="none" />
      </Ico>
      <span className="w-[41px] tracking-[-0.4px]">100%</span>
    </div>
  );
}

function Slot({ children, dot = true, active }: { children: React.ReactNode; dot?: boolean; active?: boolean }) {
  return (
    <div className="flex w-[55px] justify-center pt-1">
      <div className={active ? 'flex h-[50px] w-[50px] flex-col items-center rounded-[6px] border border-white/10 bg-white/8' : 'flex h-[50px] w-[50px] flex-col items-center'}>
        <div className={active ? 'mt-[9px] h-[32px]' : 'mt-[10px] h-[32px]'}>{children}</div>
        {dot && <div className={active ? 'mt-[3px] h-1 w-5 rounded-full bg-[#d79ae0]' : 'mt-[3px] h-1 w-2 rounded-full bg-[#9a938e]'} />}
      </div>
    </div>
  );
}

function Taskbar() {
  return (
    <div className="flex h-[60px] border-t border-[#4b433c] bg-[linear-gradient(90deg,#2b2018_0%,#2b211e_10%,#301e13_22%,#2c201a_33%,#2c211f_50%,#2f2118_60%,#302518_75%,#301f17_90%,#302618_100%)]">
      <svg width="40" height="40" viewBox="22 1025 40 40" className="ml-[22px] mt-1 block">
        <defs><linearGradient id="sun" x1="0" y1="0" x2="1" y2="1"><stop stopColor="#fcc02e" /><stop offset="1" stopColor="#f0701a" /></linearGradient></defs>
        <circle cx="40" cy="1049" r="12.500" fill="url(#sun)" />
        <path d="M29 1045a4 4 0 0 1-.5-8a6 6 0 0 1 11-1q5 4 1 9z" fill="#b9cdf5" />
        <path d="M41 1060a3.500 3.500 0 0 1 0-6.500a5 5 0 0 1 9-.5a3.600 3.600 0 0 1 1.500 7z" fill="#cfdcf8" />
        <circle cx="49" cy="1037.500" r="10" fill="#fc98a2" />
        <text x="49" y="1042" fontSize="12.500" textAnchor="middle" fill="#3a1a1c" fontFamily="Open Sans">1</text>
      </svg>
      <div className="ml-[2px] mt-[9px] w-[466px] text-[14px] leading-[20px]">
        <div>80°F</div><div className="text-[#c0b8b2]">Partly sunny</div>
      </div>
      <svg width="29" height="29" viewBox="0 0 29 29" className="mt-[15px] block">
        <defs><linearGradient id="win" x1="0" y1="0" x2="1" y2="1"><stop stopColor="#7deaff" /><stop offset="1" stopColor="#0f96f5" /></linearGradient></defs>
        <path d="M0 1q0-1 1-1h13v14H0z M15 0h13q1 0 1 1v13H15z M0 15h14v14H1q-1 0-1-1z M15 15h14v13q0 1-1 1H15z" fill="url(#win)" />
      </svg>
      <div className="ml-[17px] mt-[9px] flex h-10 w-[275px] items-center rounded-full border border-[#5c524e] bg-[#463d3a]">
        <svg width="46" height="38" viewBox="577 1031 46 38" fill="none" stroke="#eee" strokeWidth="1.800"><circle cx="598.500" cy="1048.500" r="7" /><path d="M604 1054l5 4.500" strokeWidth="2.500" /></svg>
        <span className="w-[160px] pt-px text-[15.500px] tracking-[0.3px] text-[#d8d2ce]">Search</span>
        <svg width="62" height="38" viewBox="782 1031 62 38">
          <g fill="#8a8079" fontFamily="Liberation Serif" fontStyle="italic">
            <text x="783" y="1059" fontSize="13">{'{'}</text><text x="790" y="1053" fontSize="6">1 1</text><text x="790" y="1060" fontSize="6">1 6 0</text>
            <text x="831" y="1045" fontSize="6">√–2a</text><text x="831" y="1052" fontSize="6">nxm!</text>
          </g>
          <path d="M801 1043c1-3 3-2 5-2c2-6 8-8 13-7c6-1 9 1 12 3l-1 4l2 3l-3 4l-1 5l5 14h-28l-1-9l2-4z" fill="#14121a" />
          <path d="M805 1056c7 1 9 5 10 11h-10z M822 1052l10 15h-8z" fill="#232c52" />
          <path d="M800 1042q4-2 5 2l1 6q-3-3-6-8z" fill="#7a4630" />
          <path d="M807 1041q3-4 8-2q4 3 3 9q-1 7-6 8q-5-2-6-9z" fill="#eec6a8" />
          <path d="M806 1042q2-5 8-5q5 2 4 8q-4-5-12-3z" fill="#4a2c20" /><path d="M808 1056l8-3l3 5l-8 2z" fill="#f4dccb" />
          <path d="M816 1036l4-1l5 2l-1 5l-4 1l1-3z" fill="#c9a227" /><path d="M809.500 1051.500q2 1.500 4 0" stroke="#b0303a" fill="none" />
          <path d="M809 1046h2 M813.500 1046h2" stroke="#4a2c20" />
        </svg>
      </div>
      <div className="ml-[2px] flex">
        <Slot dot={false}>
          <svg width="32" height="30" viewBox="0 0 32 30"><rect x="9" y="1" width="22" height="20" rx="1" fill="#f2f2f2" /><rect x="1" y="9" width="22" height="20" rx="1" fill="#6a6a6a" /><path d="M9 9h14v12H9z" fill="#a8a8a8" /></svg>
        </Slot>
        <Slot>
          <svg width="32" height="30" viewBox="0 0 32 30" className="overflow-visible">
            <circle cx="16" cy="15" r="14.800" fill="#fbc116" />
            <path d="M16 15L3.200 7.800A14.800 14.800 0 0 1 28.900 7.700H16z" fill="#e33b2e" />
            <path d="M3.200 7.600A14.800 14.800 0 0 0 15 29.800l6.300-11.300L16 15l-6 3.500z" fill="#2da94f" />
            <circle cx="16" cy="15" r="7.300" fill="#fff" /><circle cx="16" cy="15" r="5.700" fill="#3b78e7" />
            <circle cx="27" cy="4" r="10" fill="#0b5394" /><text x="27" y="8" fontSize="11" textAnchor="middle" fill="#c9def2" fontWeight="700" fontFamily="Open Sans">A</text>
          </svg>
        </Slot>
        <Slot dot={false}>
          <svg width="32" height="30" viewBox="0 0 32 30">
            <defs><linearGradient id="ff" x1=".8" y1="0" x2=".3" y2="1"><stop stopColor="#fff04a" /><stop offset=".5" stopColor="#ff8a1e" /><stop offset="1" stopColor="#f5175f" /></linearGradient></defs>
            <path d="M18 0c3 2 5 5 6 8l2-1c3 4 5 9 3 14c-2 6-8 8-13 8C7 29 2 23 2 16c0-5 1-8 3-11l2 3l3-4l2 4h3c0-3 1-6 3-8z" fill="url(#ff)" />
            <circle cx="15.500" cy="15.500" r="6.500" fill="#7a35e0" /><path d="M5 8c4-1 8 1 12 4c-3 0-5 1-6 3c-3 0-5-3-6-7z" fill="#ffa21e" />
          </svg>
        </Slot>
        <Slot dot={false}>
          <svg width="32" height="30" viewBox="0 0 32 30"><path d="M1 4q0-2 2-2h8l3 3h11v6H1z" fill="#dc9a08" /><path d="M1 8h11l3-3h14q2 0 2 2v21H1z" fill="#ffcf4a" /><path d="M6 28v-5q0-2 2-2h16q2 0 2 2v5z" fill="#1579c8" /><path d="M10 24.500h12" stroke="#0a4c86" strokeWidth="1.500" /></svg>
        </Slot>
        <Slot>
          <svg width="32" height="30" viewBox="0 0 32 30"><path d="M1 9l3-2.500L23 22v8L1 11z" fill="#0f7dc8" /><path d="M1 21l3 2.500L23 8V0L1 19z" fill="#0a6ab4" /><path d="M23 0v30l8-4V4z" fill="#28aaf0" /></svg>
        </Slot>
        <Slot>
          <svg width="32" height="30" viewBox="0 0 32 30"><circle cx="17" cy="15" r="13.700" fill="#d35230" /><path d="M17 1.300A13.700 13.700 0 0 1 30.700 15H17z" fill="#ff8f6b" /><path d="M17 1.300V15H3.300A13.700 13.700 0 0 1 17 1.300z" fill="#ed6c47" /><rect x="1" y="7" width="15.500" height="15.500" rx="1.500" fill="#c43e1c" /><text x="8.500" y="19.200" fontSize="12" fontWeight="700" fill="#fff" textAnchor="middle" fontFamily="Open Sans">P</text></svg>
        </Slot>
        <Slot>
          <svg width="32" height="30" viewBox="0 0 32 30"><path d="M8 1h22.500v7H8z" fill="#41a5ee" /><path d="M8 8h22.500v7H8z" fill="#2b7cd3" /><path d="M8 15h22.500v7H8z" fill="#185abd" /><path d="M8 22h22.500v6.500H8z" fill="#103f91" /><rect x="1" y="7" width="15.500" height="15.500" rx="1.500" fill="#185abd" /><text x="8.700" y="19" fontSize="11.500" fontWeight="700" fill="#fff" textAnchor="middle" fontFamily="Open Sans">W</text></svg>
        </Slot>
        <Slot>
          <svg width="32" height="30" viewBox="0 0 32 30" className="overflow-visible"><path d="M1 30l2.200-8A15 15 0 1 1 9 28z" fill="#fff" /><path d="M4.500 26.500l1.500-5A12.200 12.200 0 1 1 10.500 25z" fill="#35bd50" /><path d="M11 8.500q1.500-1.500 2.500.5l1 2.500q0 1-1.300 2q2 3.500 5.300 5q1.500-2 2.300-1.700l3 1.600q0 4-4 3.800c-5-.3-11-6.700-10.600-10.800q.3-2 1.800-2.900z" fill="#fff" /><circle cx="27" cy="4" r="10" fill="#d79ae0" /><text x="27" y="9" fontSize="13.500" textAnchor="middle" fill="#1c1020" fontFamily="Open Sans">8</text></svg>
        </Slot>
        <Slot>
          <svg width="32" height="30" viewBox="0 0 32 30">
            <defs>
              <linearGradient id="e1" x1="0" y1="0" x2="1" y2=".4"><stop stopColor="#1a9fe0" /><stop offset=".6" stopColor="#35c8c0" /><stop offset="1" stopColor="#66e04a" /></linearGradient>
              <linearGradient id="e2" x1="0" y1="0" x2="0" y2="1"><stop stopColor="#1494dc" /><stop offset="1" stopColor="#0c59a4" /></linearGradient>
            </defs>
            <circle cx="16" cy="15" r="14.800" fill="url(#e2)" />
            <path d="M1.500 14C2 6 8 .2 16 .2c9 0 15 6 15 12.500c0 5-4 7.300-7.500 7.300c-3.500 0-5.500-1.500-4.500-3c2-3-1-7-6-7c-5 0-10 2-11.500 4z" fill="url(#e1)" />
            <path d="M19 17c-1 1.500 1 3 4.500 3c2.500 0 5-1 6.500-3l1 2l-2 4c-4 2-9 2-12-1s-3-6-1-9c3 0 4 2 3 4z" fill="#2b2320" />
            <path d="M14 13c-3 4-1 14 8 14c3 0 5-1.500 6-2.500c-4 5-10 6-14 4c-6-3-6-12 0-15.500z" fill="#0d4f9c" />
          </svg>
        </Slot>
        <Slot active><ExcelLogo size={30} /></Slot>
      </div>
      <div className="flex flex-1 justify-end pr-[25px]">
        <Ico x={1580} y={1021} w={46} h={59}><path d="M1597 1053l6-6l6 6" stroke="#fff" strokeWidth={1.8} /></Ico>
        <div className="mt-[10px] w-[50px] text-center text-[14px] leading-[20px]"><div>ENG</div><div>IN</div></div>
        <Ico x={1676} y={1021} w={104} h={59}>
          <g stroke="#fff" strokeWidth={1.4}>
            <path d="M1698 1059.500a9.500 9.500 0 1 1 9.500-10 M1689 1046.500h18 M1689 1053.500h8 M1697 1059c-5-5-5-14 1-18.500c2.500 2 4.500 5 4.500 8.500" />
            <circle cx="1702" cy="1054.500" r="5.300" /><path d="M1698.500 1058l7-7" />
            <path d="M1718.500 1047v6h3l5 4.500v-15l-5 4.500z M1729 1046.500q2 3.500 0 7 M1732 1044q3.500 6 0 12 M1735 1041.500q5 8.500 0 17" />
            <rect x="1749.500" y="1045" width="15" height="11" rx="2.500" /><path d="M1766.500 1048.500v4" strokeWidth={2.5} />
          </g>
          <path d="M1752 1047.500h10.500v6.500h-10.500z" fill="#fff" stroke="none" />
          <path d="M1752.500 1040l-4 6h3l-1.500 4.500l4.500-6h-3z" fill="#fff" stroke="#2f2118" strokeWidth={0.5} />
        </Ico>
        <div className="mt-[9px] w-[86px] whitespace-nowrap text-right text-[14px] leading-[20px]">
          <div className="tracking-[0.1px]">01:49 PM</div><div className="tracking-[0.450px]">10-10-2023</div>
        </div>
        <div className="ml-[9px] mt-[19px] flex size-5 items-center justify-center rounded-full bg-[#d79ae0] text-[12px] text-[#2a1630]">3</div>
      </div>
    </div>
  );
}

export default function App() {
  return (
    <div className="flex h-[1080px] w-[1920px] flex-col overflow-hidden bg-[#0a0a0a] font-['Open_Sans',sans-serif] text-white">
      <TitleBar />
      <TabStrip />
      <Ribbon />
      <FormulaBar />
      <Sheet />
      <SheetTabs />
      <StatusBar />
      <Taskbar />
    </div>
  );
}
